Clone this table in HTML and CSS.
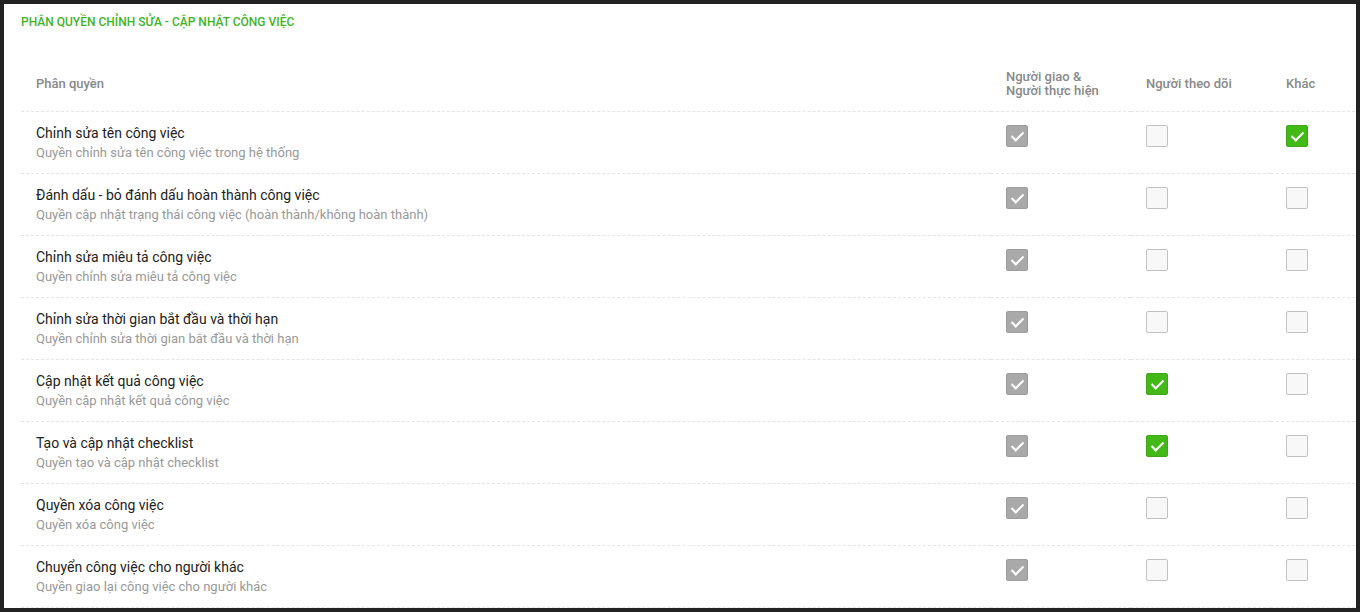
FILE: index.html
```html
<!DOCTYPE html>
<html lang="vi">

<head>
    <meta charset="UTF-8">
    <meta name="viewport" content="width=device-width, initial-scale=1.0">
    <title>Phân quyền chỉnh sửa - cập nhật công việc</title>
    <link rel="stylesheet" href="styles.css">
</head>

<body>
    <div class="panel">
        <h3 class="panelTitle">Phân quyền chỉnh sửa - cập nhật công việc</h3>
        <table class="perms">
            <thead>
                <tr>
                    <th>Phân quyền</th>
                    <th class="colBox">Người giao &amp;<br>Người thực hiện</th>
                    <th class="colBox">Người theo dõi</th>
                    <th class="colLast">Khác</th>
                </tr>
            </thead>
            <tbody>
                <tr>
                    <td><div class="name">Chỉnh sửa tên công việc</div>
                        <div class="desc">Quyền chỉnh sửa tên công việc trong hệ thống</div></td>
                    <td class="boxCell"><span class="chk chkLock"></span></td>
                    <td class="boxCell"><span class="chk"></span></td>
                    <td class="boxCell"><span class="chk chkOn"></span></td>
                </tr>
                <tr>
                    <td><div class="name">Đánh dấu - bỏ đánh dấu hoàn thành công việc</div>
                        <div class="desc">Quyền cập nhật trạng thái công việc (hoàn thành/không hoàn thành)</div></td>
                    <td class="boxCell"><span class="chk chkLock"></span></td>
                    <td class="boxCell"><span class="chk"></span></td>
                    <td class="boxCell"><span class="chk"></span></td>
                </tr>
                <tr>
                    <td><div class="name">Chỉnh sửa miêu tả công việc</div>
                        <div class="desc">Quyền chỉnh sửa miêu tả công việc</div></td>
                    <td class="boxCell"><span class="chk chkLock"></span></td>
                    <td class="boxCell"><span class="chk"></span></td>
                    <td class="boxCell"><span class="chk"></span></td>
                </tr>
                <tr>
                    <td><div class="name">Chỉnh sửa thời gian bắt đầu và thời hạn</div>
                        <div class="desc">Quyền chỉnh sửa thời gian bắt đầu và thời hạn</div></td>
                    <td class="boxCell"><span class="chk chkLock"></span></td>
                    <td class="boxCell"><span class="chk"></span></td>
                    <td class="boxCell"><span class="chk"></span></td>
                </tr>
                <tr>
                    <td><div class="name">Cập nhật kết quả công việc</div>
                        <div class="desc">Quyền cập nhật kết quả công việc</div></td>
                    <td class="boxCell"><span class="chk chkLock"></span></td>
                    <td class="boxCell"><span class="chk chkOn"></span></td>
                    <td class="boxCell"><span class="chk"></span></td>
                </tr>
                <tr>
                    <td><div class="name">Tạo và cập nhật checklist</div>
                        <div class="desc">Quyền tạo và cập nhật checklist</div></td>
                    <td class="boxCell"><span class="chk chkLock"></span></td>
                    <td class="boxCell"><span class="chk chkOn"></span></td>
                    <td class="boxCell"><span class="chk"></span></td>
                </tr>
                <tr>
                    <td><div class="name">Quyền xóa công việc</div>
                        <div class="desc">Quyền xóa công việc</div></td>
                    <td class="boxCell"><span class="chk chkLock"></span></td>
                    <td class="boxCell"><span class="chk"></span></td>
                    <td class="boxCell"><span class="chk"></span></td>
                </tr>
                <tr>
                    <td><div class="name">Chuyển công việc cho người khác</div>
                        <div class="desc">Quyền giao lại công việc cho người khác</div></td>
                    <td class="boxCell"><span class="chk chkLock"></span></td>
                    <td class="boxCell"><span class="chk"></span></td>
                    <td class="boxCell"><span class="chk"></span></td>
                </tr>
            </tbody>
        </table>
    </div>
</body>

</html>
```

FILE: styles.css
```css
body {
    margin: 0;
    padding: 4px;
    background-color: #222;
    font-family: Roboto, "Noto Sans", Arial, sans-serif;
    height: 612px;
    box-sizing: border-box;
    overflow: hidden;
}

.panel {
    background-color: #fff;
    height: 604px;
    padding: 10px 1px 0 17px;
    box-sizing: border-box;
    overflow: hidden;
}

.panelTitle {
    margin: 0 0 27px 0;
    font-size: 12px;
    line-height: 16px;
    font-weight: 500;
    color: #3fb51f;
    text-transform: uppercase;
}

.perms {
    width: 1334px;
    border-collapse: collapse;
}

.perms th {
    text-align: left;
    font-size: 13px;
    line-height: 14px;
    font-weight: 500;
    color: #888;
    padding: 13px 15px;
    height: 28px;
    border-bottom: 1px dashed #e4e4e4;
}

.perms td {
    padding: 11px 15px 11px 15px;
    border-bottom: 1px dashed #e4e4e4;
    vertical-align: top;
}

.perms .colBox {
    width: 110px;
}

.perms .colLast {
    width: 54px;
}

.perms td.boxCell {
    padding-top: 13px;
}

.name {
    font-size: 14px;
    line-height: 20px;
    color: #222;
}

.desc {
    margin-top: 1px;
    font-size: 13px;
    line-height: 18px;
    color: #999;
}

.chk {
    position: relative;
    display: block;
    width: 22px;
    height: 22px;
    box-sizing: border-box;
    border: 1px solid #c2c2c2;
    border-radius: 2px;
    background-color: #f8f8f8;
}

.chkLock {
    background-color: #a9a9a9;
    border-color: #9c9c9c;
}

.chkOn {
    background-color: #43b918;
    border-color: #3caa14;
}

.chkLock::after,
.chkOn::after {
    content: "";
    position: absolute;
    left: 7px;
    top: 3px;
    width: 5px;
    height: 10px;
    border: solid #fff;
    border-width: 0 2px 2px 0;
    transform: rotate(45deg);
}
```
